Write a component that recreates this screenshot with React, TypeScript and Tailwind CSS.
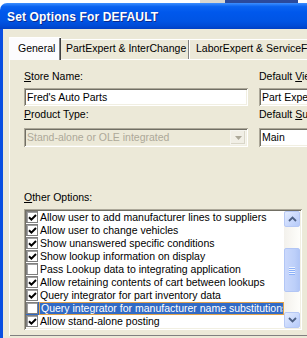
import React from 'react';

type Option = { label: string; checked: boolean; selected?: boolean };

const options: Option[] = [
  { label: 'Allow user to add manufacturer lines to suppliers', checked: true },
  { label: 'Allow user to change vehicles', checked: true },
  { label: 'Show unanswered specific conditions', checked: true },
  { label: 'Show lookup information on display', checked: true },
  { label: 'Pass Lookup data to integrating application', checked: false },
  { label: 'Allow retaining contents of cart between lookups', checked: true },
  { label: 'Query integrator for part inventory data', checked: true },
  { label: 'Query integrator for manufacturer name substitutions', checked: false, selected: true },
  { label: 'Allow stand-alone posting', checked: true },
];

const sunken =
  'shadow-[inset_1px_1px_0_#aca899,inset_-1px_-1px_0_#ffffff,inset_2px_2px_0_#716f64,inset_-2px_-2px_0_#f1efe2]';

const Check = ({ checked }: { checked: boolean }) => (
  <div className="flex h-[12px] w-[12px] shrink-0 items-center justify-center border border-[#7f7f7f] bg-white shadow-[inset_1px_1px_0_#a0a0a0]">
    {checked && (
      <svg width="9" height="9" viewBox="0 0 9 9">
        <path d="M1 4.2 L3.4 6.6 L8 2" stroke="#000" strokeWidth="2" fill="none" />
      </svg>
    )}
  </div>
);

const Chevron = ({ up }: { up?: boolean }) => (
  <svg width="9" height="6" viewBox="0 0 9 6">
    <path d={up ? 'M1 5 L4.5 1.5 L8 5' : 'M1 1 L4.5 4.5 L8 1'} stroke="#4d6185" strokeWidth="1.8" fill="none" />
  </svg>
);

const ScrollButton = ({ up }: { up?: boolean }) => (
  <div className="flex h-[16px] w-[16px] items-center justify-center rounded-[2px] border border-[#b7c9f5] bg-[linear-gradient(135deg,#e4ecfe_0%,#c7d7fc_60%,#b6cbf9_100%)]">
    <Chevron up={up} />
  </div>
);

export default function App() {
  return (
    <div className="flex h-[338px] w-[307px] flex-col overflow-hidden bg-white font-['Liberation_Sans',Arial,sans-serif] text-[10.5px] leading-[13px] text-black">
      {/* window behind */}
      <div className="flex h-[3px] shrink-0">
        <div className="w-[200px] bg-white" />
        <div className="w-[25px] bg-[#d8d6cf]" />
        <div className="w-[73px] bg-[#2b4a9c]" />
        <div className="flex-1 bg-white" />
      </div>

      {/* title bar */}
      <div className="h-[26px] shrink-0 rounded-tl-[7px] bg-[linear-gradient(180deg,#3d8fff_0%,#0a63f0_14%,#0058ec_35%,#0054e4_70%,#004bd6_88%,#0040c4_100%)] pl-[7px] pt-[7px]">
        <span className="whitespace-nowrap text-[12px] font-bold leading-[14px] tracking-[0.15px] text-white [text-shadow:1px_1px_0_#0b2a8f]">
          Set Options For DEFAULT
        </span>
      </div>

      {/* body */}
      <div className="flex min-h-0 flex-1 flex-col border-l-[3px] border-[#0a4fe2] bg-[#ece9d8] pl-[6px]">
        {/* tabs */}
        <div className="relative z-10 mt-[8px] flex items-end">
          <div className="-mb-[1px] h-[23px] w-[52px] shrink-0 border-l border-t border-white bg-[#fcfcfe] pl-[8px] pt-[4px] shadow-[inset_-1px_0_0_#404040,inset_-2px_0_0_#808080]">
            General
          </div>
          <div className="h-[20px] w-[129px] shrink-0 whitespace-nowrap border-t border-white pl-[5px] pt-[2px] shadow-[inset_-1px_0_0_#ffffff,inset_-2px_0_0_#808080]">
            PartExpert &amp; InterChange
          </div>
          <div className="h-[20px] w-[150px] shrink-0 whitespace-nowrap border-t border-white pl-[6px] pt-[2px]">
            LaborExpert &amp; ServiceFacts
          </div>
        </div>

        {/* panel */}
        <div className="mb-[2px] flex min-h-0 flex-1 flex-col border-l border-t border-white pl-[14px] pt-[10px] shadow-[inset_0_-1px_0_#808080]">
          <div className="flex">
            {/* left column */}
            <div className="flex w-[224px] shrink-0 flex-col">
              <div className="h-[13px] whitespace-nowrap">
                <span className="underline">S</span>tore Name:
              </div>
              <div className={`mt-[5px] flex h-[18px] items-center bg-white pl-[3px] ${sunken}`}>Fred's Auto Parts</div>
              <div className="mt-[2px] h-[13px] whitespace-nowrap">
                <span className="underline">P</span>roduct Type:
              </div>
              <div className={`mt-[7px] flex h-[19px] items-center bg-[#ece9d8] pl-[3px] pr-[2px] text-[#aca899] ${sunken}`}>
                <span className="flex-1 whitespace-nowrap">Stand-alone or OLE integrated</span>
                <div className="flex h-[15px] w-[16px] items-center justify-center border border-[#f5f4ee] bg-[#f1efe6] shadow-[inset_-1px_-1px_0_#d9d6c8]">
                  <svg width="7" height="4" viewBox="0 0 7 4">
                    <path d="M0 0 H7 L3.5 4 Z" fill="#aca899" />
                  </svg>
                </div>
              </div>
            </div>

            {/* right column */}
            <div className="ml-[11px] flex w-[140px] shrink-0 flex-col">
              <div className="h-[13px] whitespace-nowrap">
                Default <span className="underline">V</span>iew:
              </div>
              <div className={`mt-[5px] flex h-[18px] items-center whitespace-nowrap bg-white pl-[3px] ${sunken}`}>Part Expert</div>
              <div className="mt-[2px] h-[13px] whitespace-nowrap">
                Default <span className="underline">S</span>upplier:
              </div>
              <div className={`mt-[7px] flex h-[19px] items-center bg-white pl-[3px] ${sunken}`}>Main</div>
            </div>
          </div>

          {/* other options */}
          <div className="mt-[44px] h-[13px] whitespace-nowrap">
            <span className="underline">O</span>ther Options:
          </div>
          <div className={`mt-[5px] flex h-[121px] w-[278px] shrink-0 bg-white p-[2px] ${sunken}`}>
            <div className="flex flex-1 flex-col overflow-hidden">
              {options.map((o) => (
                <div
                  key={o.label}
                  className={`flex h-[13px] shrink-0 items-start ${o.selected ? 'bg-[#316ac5] text-white' : ''}`}
                >
                  <Check checked={o.checked} />
                  <div
                    className={`ml-[1px] flex-1 overflow-hidden whitespace-nowrap pl-[1px] ${
                      o.selected ? 'border border-[#e0a24c] leading-[11px]' : ''
                    }`}
                  >
                    {o.label}
                  </div>
                </div>
              ))}
            </div>
            {/* scrollbar */}
            <div className="flex w-[16px] shrink-0 flex-col bg-[linear-gradient(90deg,#f3f1ec_0%,#fefefb_100%)]">
              <ScrollButton up />
              <div className="flex-1">
                <div className="mt-[21px] flex h-[44px] flex-col items-center justify-center rounded-[2px] border border-[#b2c6f5] bg-[linear-gradient(90deg,#cad8fc_0%,#bccff9_70%,#b1c6f6_100%)]">
                  <div className="h-[1px] w-[6px] bg-[#eef4fe] shadow-[0_1px_0_#8cb0f8]" />
                  <div className="mt-[1px] h-[1px] w-[6px] bg-[#eef4fe] shadow-[0_1px_0_#8cb0f8]" />
                  <div className="mt-[1px] h-[1px] w-[6px] bg-[#eef4fe] shadow-[0_1px_0_#8cb0f8]" />
                  <div className="mt-[1px] h-[1px] w-[6px] bg-[#eef4fe] shadow-[0_1px_0_#8cb0f8]" />
                </div>
              </div>
              <ScrollButton />
            </div>
          </div>
        </div>
      </div>
    </div>
  );
}
